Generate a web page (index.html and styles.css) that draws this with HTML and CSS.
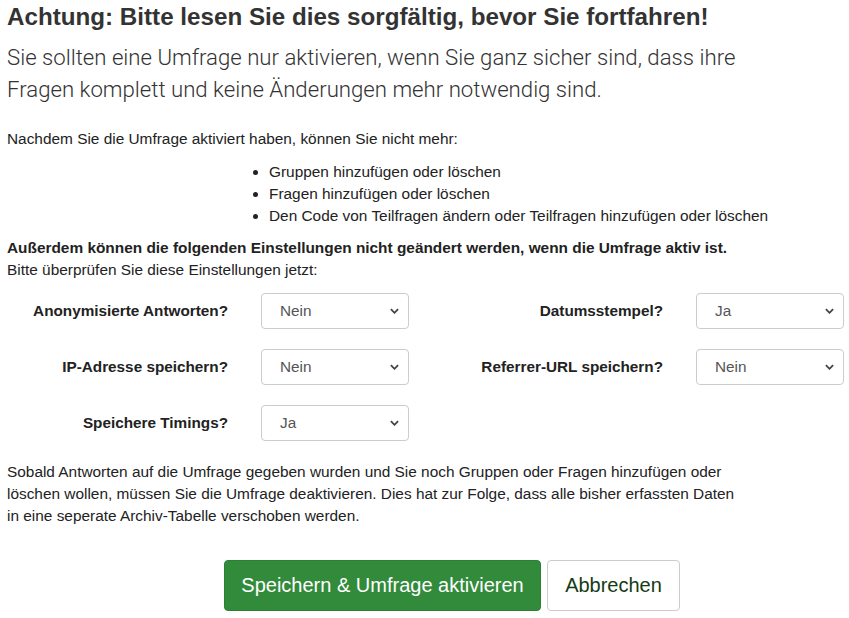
FILE: index.html
```html
<!DOCTYPE html>
<html lang="de">
<head>
<meta charset="utf-8">
<title>Umfrage aktivieren</title>
<link rel="stylesheet" href="styles.css">
</head>
<body>
<div class="page">
  <h1 class="title">Achtung: Bitte lesen Sie dies sorgfältig, bevor Sie fortfahren!</h1>
  <p class="lead">Sie sollten eine Umfrage nur aktivieren, wenn Sie ganz sicher sind, dass ihre Fragen komplett und keine Änderungen mehr notwendig sind.</p>
  <p class="text intro">Nachdem Sie die Umfrage aktiviert haben, können Sie nicht mehr:</p>
  <ul class="list">
    <li>Gruppen hinzufügen oder löschen</li>
    <li>Fragen hinzufügen oder löschen</li>
    <li>Den Code von Teilfragen ändern oder Teilfragen hinzufügen oder löschen</li>
  </ul>
  <p class="text"><strong>Außerdem können die folgenden Einstellungen nicht geändert werden, wenn die Umfrage aktiv ist.</strong><br>Bitte überprüfen Sie diese Einstellungen jetzt:</p>
  <div class="form">
    <label class="label">Anonymisierte Antworten?</label>
    <div class="select"><span>Nein</span><svg viewBox="0 0 10 6" class="chev"><path d="M1 1l4 4 4-4"/></svg></div>
    <label class="label">Datumsstempel?</label>
    <div class="select"><span>Ja</span><svg viewBox="0 0 10 6" class="chev"><path d="M1 1l4 4 4-4"/></svg></div>
    <label class="label">IP-Adresse speichern?</label>
    <div class="select"><span>Nein</span><svg viewBox="0 0 10 6" class="chev"><path d="M1 1l4 4 4-4"/></svg></div>
    <label class="label">Referrer-URL speichern?</label>
    <div class="select"><span>Nein</span><svg viewBox="0 0 10 6" class="chev"><path d="M1 1l4 4 4-4"/></svg></div>
    <label class="label">Speichere Timings?</label>
    <div class="select"><span>Ja</span><svg viewBox="0 0 10 6" class="chev"><path d="M1 1l4 4 4-4"/></svg></div>
  </div>
  <p class="text outro">Sobald Antworten auf die Umfrage gegeben wurden und Sie noch Gruppen oder Fragen hinzufügen oder löschen wollen, müssen Sie die Umfrage deaktivieren. Dies hat zur Folge, dass alle bisher erfassten Daten in eine seperate Archiv-Tabelle verschoben werden.</p>
  <div class="actions">
    <button class="btn btn-primary">Speichern &amp; Umfrage aktivieren</button>
    <button class="btn btn-default">Abbrechen</button>
  </div>
</div>
</body>
</html>
```
FILE: styles.css
```css
html, body {
  margin: 0;
  padding: 0;
  background: #fff;
}
body {
  font-family: "Liberation Sans", Arial, sans-serif;
  color: #222;
  font-size: 15.4px;
  line-height: 22px;
}
.page {
  padding: 0 7px;
}
.title {
  margin: 3px 0 0;
  font-size: 24.2px;
  line-height: 28px;
  font-weight: bold;
  color: #333;
}
.lead {
  margin: 10px 0 0;
  max-width: 760px;
  font-family: Roboto, "Liberation Sans", sans-serif;
  font-size: 22.2px;
  line-height: 32px;
  font-weight: 300;
  color: #333;
}
.text {
  margin: 0;
}
.intro {
  margin-top: 23px;
}
.list {
  margin: 11px 0 10px;
  padding-left: 262px;
}
.list li {
  line-height: 22px;
}
.form {
  display: grid;
  grid-template-columns: 221px 148px 221px 148px;
  column-gap: 33px;
  row-gap: 20px;
  margin-top: 12px;
  font-size: 15.3px;
}
.label {
  font-weight: bold;
  text-align: right;
  align-self: center;
  color: #222;
}
.select {
  height: 36px;
  box-sizing: border-box;
  border: 1px solid #ccc;
  border-radius: 4px;
  display: flex;
  align-items: center;
  justify-content: space-between;
  padding: 0 9px 0 18px;
  color: #555;
}
.chev {
  width: 9px;
  height: 6px;
  fill: none;
  stroke: #444;
  stroke-width: 2;
}
.outro {
  margin-top: 20px;
  max-width: 740px;
}
.actions {
  display: flex;
  gap: 6px;
  padding-left: 217px;
  margin-top: 33px;
}
.btn {
  font-family: "Liberation Sans", Arial, sans-serif;
  font-size: 20px;
  height: 51px;
  border-radius: 4px;
  padding: 0 10px;
  cursor: pointer;
}
.btn-primary {
  width: 317px;
  background: #328a3b;
  border: 1px solid #2d7f35;
  color: #fff;
}
.btn-default {
  width: 133px;
  background: #fff;
  border: 1px solid #ccc;
  color: #153a15;
}
```
